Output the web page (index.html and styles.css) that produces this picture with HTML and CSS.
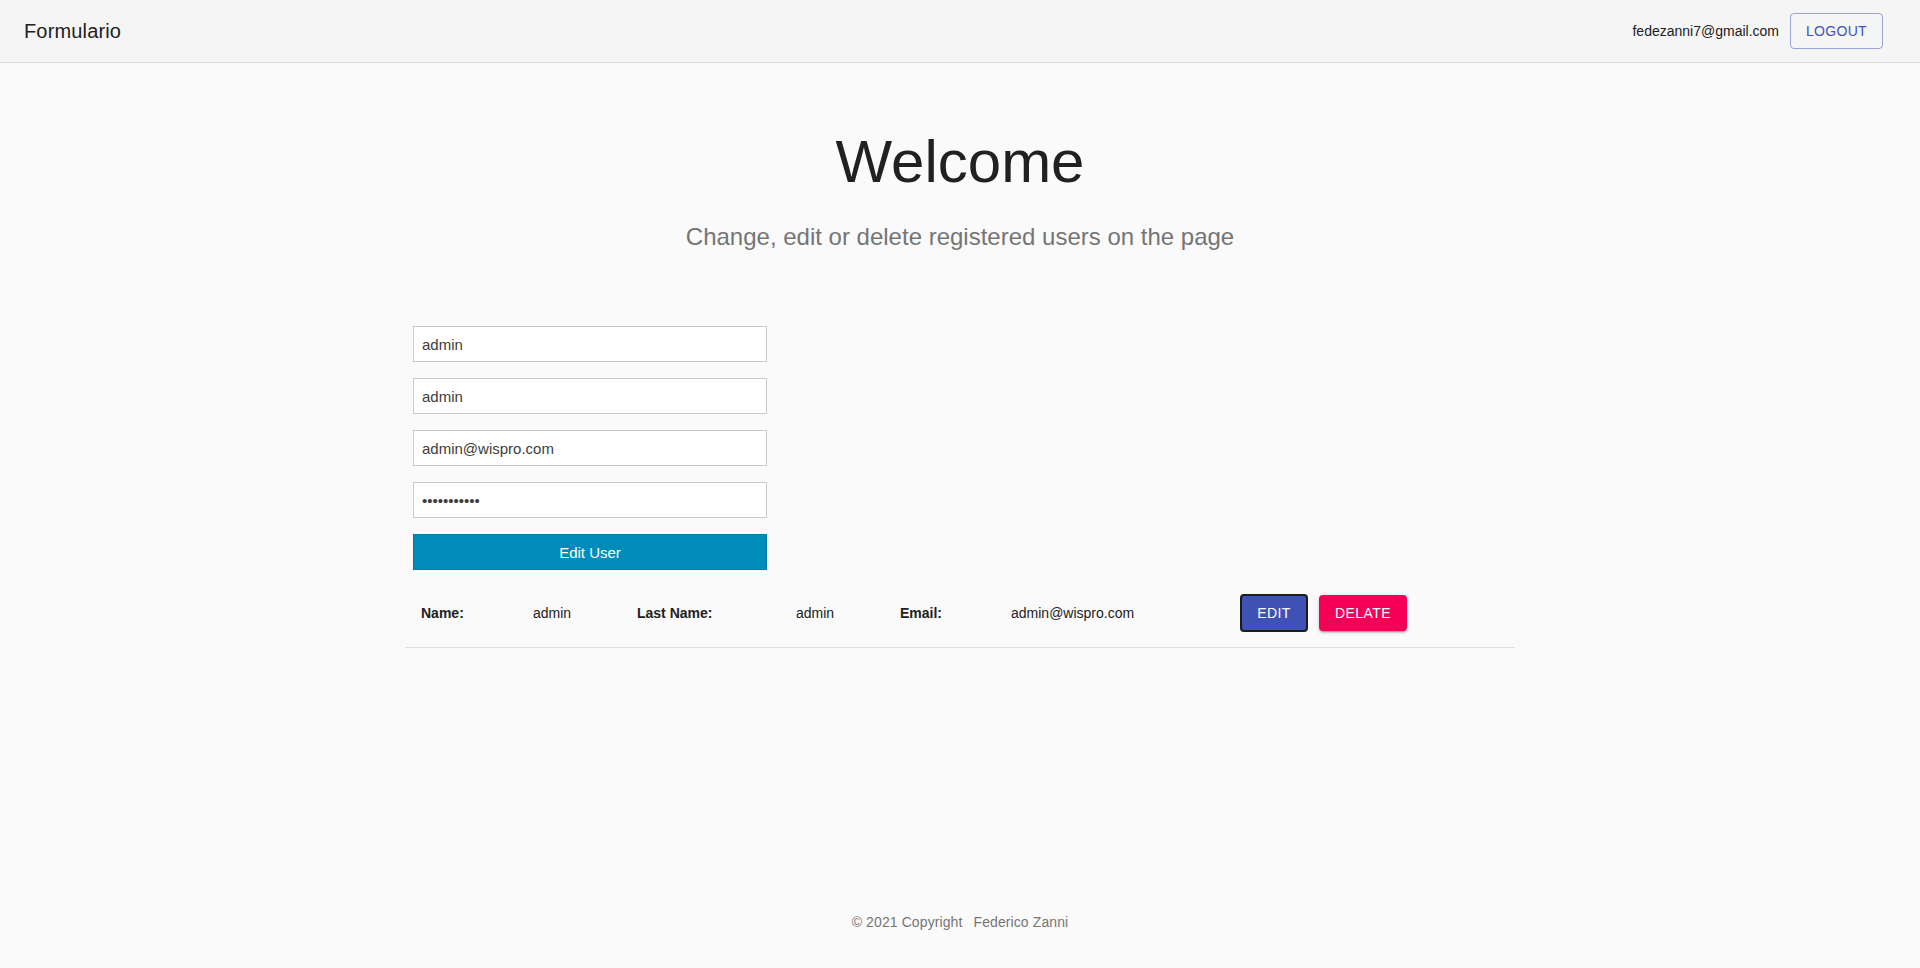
FILE: index.html
```html
<!DOCTYPE html>
<html lang="en">
<head>
<meta charset="utf-8">
<title>Formulario</title>
<link rel="stylesheet" href="styles.css">
</head>
<body>
<div class="page">
  <header class="topbar">
    <div class="brand">Formulario</div>
    <div class="account">
      <span class="account-email">fedezanni7@gmail.com</span>
      <button class="btn-outline" type="button">Logout</button>
    </div>
  </header>

  <main class="main">
    <div class="container">
      <h1 class="title">Welcome</h1>
      <p class="subtitle">Change, edit or delete registered users on the page</p>

      <form class="user-form">
        <input class="field" type="text" value="admin">
        <input class="field" type="text" value="admin">
        <input class="field" type="email" value="admin@wispro.com">
        <input class="field" type="password" value="admin123456">
        <button class="btn-submit" type="button">Edit User</button>
      </form>

      <div class="user-row">
        <span class="label">Name:</span>
        <span class="value">admin</span>
        <span class="label">Last Name:</span>
        <span class="value">admin</span>
        <span class="label">Email:</span>
        <span class="value">admin@wispro.com</span>
        <div class="actions">
          <button class="btn btn-edit" type="button">Edit</button>
          <button class="btn btn-delete" type="button">Delate</button>
        </div>
      </div>
    </div>
  </main>

  <footer class="footer">
    <span>© 2021 Copyright</span>
    <a class="footer-link" href="#">Federico Zanni</a>
  </footer>
</div>
</body>
</html>
```

FILE: styles.css
```css
* {
  box-sizing: border-box;
}

html, body {
  margin: 0;
  padding: 0;
}

body {
  background: #fafafa;
  font-family: "Liberation Sans", Arial, sans-serif;
  color: #212121;
}

.page {
  min-height: 100vh;
  display: flex;
  flex-direction: column;
}

/* Header */
.topbar {
  height: 63px;
  background: #f5f5f5;
  border-bottom: 1px solid #dadada;
  display: flex;
  align-items: center;
  justify-content: space-between;
  padding: 0 37px 0 24px;
}

.brand {
  font-size: 20px;
  line-height: 32px;
  letter-spacing: 0.15px;
  color: #212121;
}

.account {
  display: flex;
  align-items: center;
  gap: 11px;
}

.account-email {
  font-size: 14px;
  line-height: 20px;
  color: #212121;
}

.btn-outline {
  height: 36px;
  width: 93px;
  padding: 0;
  border: 1px solid rgba(63, 81, 181, 0.5);
  border-radius: 4px;
  background: transparent;
  color: #3f51b5;
  font-family: "Liberation Sans", Arial, sans-serif;
  font-size: 14px;
  text-transform: uppercase;
  letter-spacing: 0.3px;
}

/* Main */
.main {
  flex: 1;
}

.container {
  width: 1110px;
  margin: 0 auto;
}

.title {
  margin: 63px 0 0;
  font-size: 60px;
  line-height: 72px;
  font-weight: 400;
  text-align: center;
  color: #212121;
}

.subtitle {
  margin: 23px 0 0;
  font-size: 24px;
  line-height: 32px;
  text-align: center;
  color: #757575;
}

.user-form {
  margin: 73px 0 0 8px;
  width: 354px;
  display: flex;
  flex-direction: column;
  gap: 16px;
}

.field {
  height: 36px;
  width: 100%;
  border: 1px solid #cacaca;
  background: #fff;
  padding: 0 8px;
  font-family: "Liberation Sans", Arial, sans-serif;
  font-size: 15px;
  color: #3d3d3d;
  border-radius: 0;
  outline: none;
}

.btn-submit {
  height: 36px;
  width: 100%;
  border: 1px solid #007ca6;
  background: #008cba;
  color: #fff;
  font-family: "Liberation Sans", Arial, sans-serif;
  font-size: 15px;
  padding: 0;
}

/* User row */
.user-row {
  margin-top: 9px;
  height: 69px;
  border-bottom: 1px solid #e0e0e0;
  display: grid;
  grid-template-columns: 112px 104px 159px 104px 111px 229px auto;
  align-items: center;
  padding-left: 16px;
  font-size: 14px;
}

.label {
  font-weight: 700;
  color: #212121;
}

.value {
  color: #212121;
}

.actions {
  display: flex;
  align-items: center;
  gap: 11px;
}

.btn {
  font-family: "Liberation Sans", Arial, sans-serif;
  font-size: 14px;
  text-transform: uppercase;
  letter-spacing: 0.4px;
  color: #fff;
  border-radius: 4px;
  padding: 0;
}

.btn-edit {
  width: 68px;
  height: 38px;
  background: #3f51b5;
  border: 2px solid #1c1c1c;
}

.btn-delete {
  width: 88px;
  height: 36px;
  background: #f50057;
  border: none;
  box-shadow: 0 3px 1px -2px rgba(0, 0, 0, 0.2), 0 2px 2px 0 rgba(0, 0, 0, 0.14), 0 1px 5px 0 rgba(0, 0, 0, 0.12);
}

/* Footer */
.footer {
  padding: 24px 0 36px;
  text-align: center;
  font-size: 14px;
  line-height: 20px;
  letter-spacing: 0.1px;
  color: #757575;
}

.footer-link {
  color: inherit;
  text-decoration: none;
  margin-left: 7px;
}
```
